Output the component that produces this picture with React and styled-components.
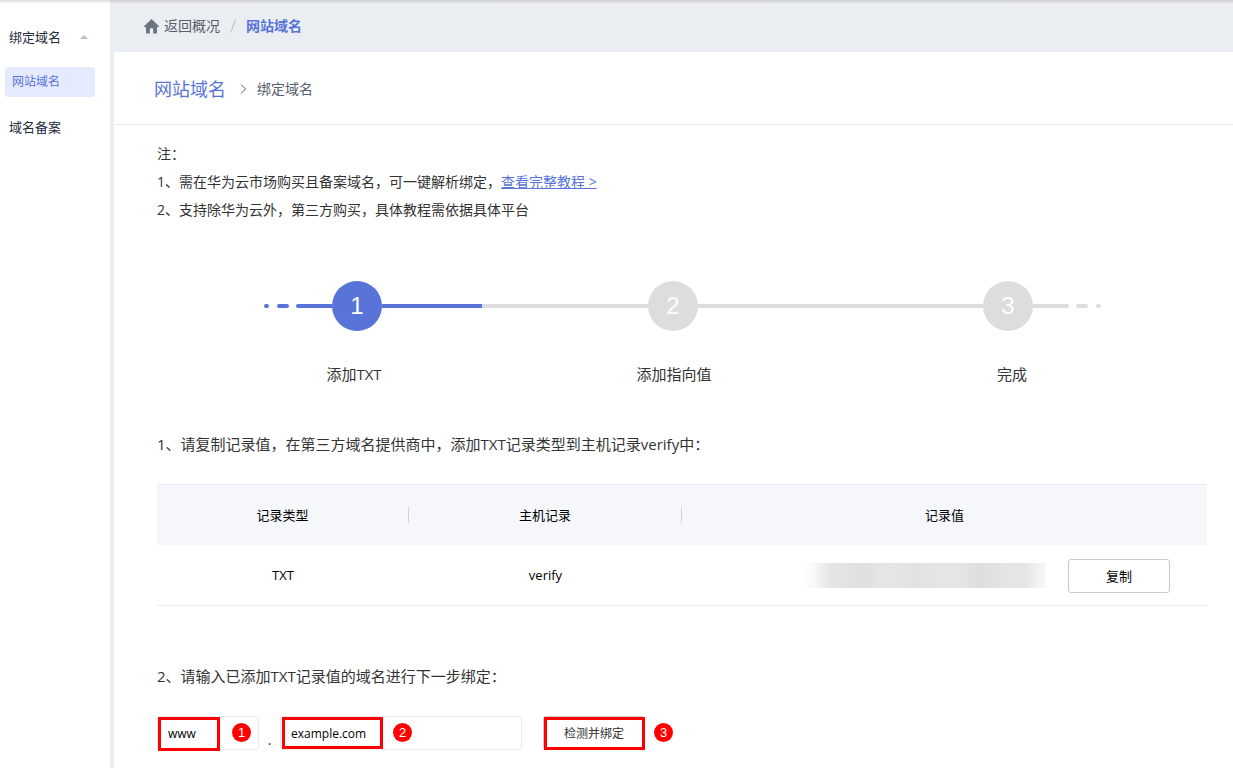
import React from 'react';
import styled, { createGlobalStyle } from 'styled-components';

const BLUE = '#5874d8';
const GREY = '#dddddd';
const RED = '#ff0000';

const GlobalStyle = createGlobalStyle`
  *, *::before, *::after { box-sizing: border-box; }
  body {
    margin: 0;
    background: #ffffff;
    color: #333333;
    font-family: "Open Sans", "Noto Sans CJK SC", sans-serif;
    font-size: 14px;
    line-height: 20px;
  }
  button, input { font-family: inherit; }
`;

const Page = styled.div`
  display: flex;
  min-height: 100vh;
  position: relative;
  overflow: hidden;
  &::before {
    content: '';
    position: absolute;
    inset: 0 0 auto 0;
    height: 4px;
    background: linear-gradient(rgba(0, 0, 0, 0.13), rgba(0, 0, 0, 0));
  }
`;

const Sidebar = styled.nav`
  flex: none;
  width: 114px;
  padding: 22px 15px 0 5px;
  border-right: 4px solid #eaedf2;
  display: flex;
  flex-direction: column;
  gap: 15px;
`;

const NavItem = styled.a`
  display: flex;
  align-items: center;
  justify-content: space-between;
  height: 30px;
  padding: 0 7px 0 ${(p) => (p.$active ? 7 : 4)}px;
  border-radius: 3px;
  font-size: ${(p) => (p.$active ? 12 : 13)}px;
  color: ${(p) => (p.$active ? BLUE : '#252b3a')};
  background: ${(p) => (p.$active ? '#e6eaff' : 'transparent')};
  text-decoration: none;
  white-space: nowrap;
`;

const Main = styled.main`
  flex: 1;
  min-width: 0;
`;

const TopBar = styled.div`
  display: flex;
  align-items: center;
  height: 52px;
  padding-left: 30px;
  background: #eaedf2;
`;

const HomeLink = styled.a`
  display: flex;
  align-items: center;
  gap: 5px;
  color: #575d6c;
  text-decoration: none;
`;

const Slash = styled.svg`
  margin: 0 10px;
`;

const Current = styled.span`
  color: ${BLUE};
  font-weight: 700;
`;

const Heading = styled.header`
  display: flex;
  align-items: center;
  height: 73px;
  padding: 2px 0 0 40px;
  border-bottom: 1px solid #e8eaef;
  color: #575d6c;
`;

const Chevron = styled.svg`
  margin: 0 10px 0 14px;
`;

const HeadingLink = styled.a`
  font-size: 18px;
  color: ${BLUE};
  text-decoration: none;
`;

const Content = styled.div`
  padding: 15px 26px 17px 43px;
`;

const Note = styled.p`
  margin: 0;
  line-height: 28px;
  a { color: ${BLUE}; }
`;

const Track = styled.div`
  display: flex;
  align-items: center;
  margin-top: 57px;
  padding: 0 106px 0 107px;
`;

const Bar = styled.span`
  flex: ${(p) => (p.$grow ? `${p.$grow} 1 0` : 'none')};
  width: ${(p) => p.$width || 0}px;
  height: 4px;
  margin: ${(p) => p.$gap || '0'};
  background: ${(p) => (p.$done ? BLUE : GREY)};
  border-radius: ${(p) => p.$radius || '0'};
`;

const Circle = styled.span`
  flex: none;
  width: 50px;
  height: 50px;
  border-radius: 50%;
  background: ${(p) => (p.$done ? BLUE : GREY)};
  color: #ffffff;
  font: 24px/50px "Liberation Sans", sans-serif;
  text-align: center;
`;

const StepLabels = styled.div`
  display: grid;
  grid-template-columns: 180fr 460fr 216fr;
  margin-top: 33px;
  padding: 0 87px 0 107px;
  font-size: 15px;
  text-align: center;
`;

const Instruction = styled.p`
  margin: ${(p) => p.$top}px 0 0;
  font-size: 15px;
  line-height: 20px;
`;

const RecordTable = styled.table`
  width: 100%;
  margin-top: 30px;
  table-layout: fixed;
  border-collapse: collapse;
  border-top: 1px solid #e8eaef;
  border-bottom: 1px solid #e8eaef;
  color: #000000;
  font-size: 13px;
  th, td {
    padding: 0;
    text-align: center;
    font-weight: 400;
  }
  th { height: 60px; }
  td { height: 61px; }
  thead { background: #f5f7fb; }
`;

const HeadCell = styled.span`
  display: block;
  line-height: 16px;
  border-right: ${(p) => (p.$last ? 0 : 1)}px solid #d0d4e0;
`;

const ValueCell = styled.div`
  display: flex;
  align-items: center;
  justify-content: flex-end;
  gap: 22px;
  padding: 2px 37px 0 0;
`;

const MaskedValue = styled.span`
  width: 244px;
  height: 25px;
  background: linear-gradient(90deg, #ffffff 0%, #f8f8f8 5%, #e5e6e6 11%, #dedfdf 25%, #e6e6e6 34%, #e1e3e2 46%, #e5e5e5 64%, #dededf 73%, #e5e5e5 84%, #e4e4e4 91%, #f4f4f4 98%, #f8f8f8 100%);
`;

const CopyButton = styled.button`
  width: 102px;
  height: 34px;
  padding: 0;
  border: 1px solid #cacaca;
  border-radius: 3px;
  background: #ffffff;
  color: #000000;
  font-size: 13px;
`;

const DomainForm = styled.form`
  display: flex;
  align-items: flex-start;
  margin-top: 30px;
`;

const Field = styled.div`
  position: relative;
  flex: none;
  width: ${(p) => p.$width}px;
`;

const TextInput = styled.input`
  display: block;
  width: 100%;
  height: 34px;
  padding: 0 10px;
  border: 1px solid #e8eaef;
  border-radius: 3px;
  background: #ffffff;
  color: #000000;
  font-size: 12px;
  outline: none;
`;

const Dot = styled.span`
  width: 21px;
  padding-top: 14px;
  text-align: center;
`;

const BindButton = styled.button`
  display: block;
  width: 100%;
  height: 34px;
  padding: 0;
  border: 1px solid #cacaca;
  border-radius: 3px;
  background: #ffffff;
  color: #333333;
  font-size: 12px;
`;

const Highlight = styled.span`
  position: absolute;
  top: 1px;
  left: ${(p) => p.$left}px;
  width: ${(p) => p.$width}px;
  height: ${(p) => p.$height}px;
  border: 3px solid ${RED};
  pointer-events: none;
`;

const Badge = styled.span`
  position: absolute;
  top: 7px;
  left: ${(p) => p.$left}px;
  width: 19px;
  height: 19px;
  border-radius: 50%;
  background: ${RED};
  color: #ffffff;
  font: 13px/19px "Liberation Sans", sans-serif;
  text-align: center;
`;

function HomeIcon() {
  return (
    <svg width="15" height="15" viewBox="0 0 15 15" fill="#6b7480" aria-hidden="true">
      <path d="M7.5 0 L15 7.2 L14.2 8.2 H13 V14 Q13 14.5 12.4 14.5 H9.2 V10.5 Q9.2 9 7.5 9 Q5.8 9 5.8 10.5 V14.5 H2.6 Q2 14.5 2 14 V8.2 H0.8 L0 7.2 Z" />
    </svg>
  );
}

export default function App() {
  return (
    <Page lang="zh-CN">
      <GlobalStyle />
      <Sidebar>
        <NavItem href="#bind">
          绑定域名
          <svg width="8" height="4" viewBox="0 0 8 4" fill="#b8bccb" aria-hidden="true">
            <path d="M4 0 L8 4 H0 Z" />
          </svg>
        </NavItem>
        <NavItem href="#site" $active>网站域名</NavItem>
        <NavItem href="#record">域名备案</NavItem>
      </Sidebar>
      <Main>
        <TopBar>
          <HomeLink href="#overview"><HomeIcon />返回概况</HomeLink>
          <Slash width="6" height="14" viewBox="0 0 6 14" stroke="#b9bdc7" fill="none" aria-hidden="true">
            <path d="M5.5 0.5 L0.8 13.5" />
          </Slash>
          <Current>网站域名</Current>
        </TopBar>
        <Heading>
          <HeadingLink href="#site">网站域名</HeadingLink>
          <Chevron width="7" height="10" viewBox="0 0 7 10" stroke="#575d6c" fill="none" aria-hidden="true">
            <path d="M1 0.5 L5.5 5 L1 9.5" />
          </Chevron>
          <span>绑定域名</span>
        </Heading>
        <Content>
          <Note>注：</Note>
          <Note>1、需在华为云市场购买且备案域名，可一键解析绑定，<a href="#guide">查看完整教程 &gt;</a></Note>
          <Note>2、支持除华为云外，第三方购买，具体教程需依据具体平台</Note>

          <Track>
            <Bar $done $width={5} $radius="2px" />
            <Bar $done $width={12} $gap="0 7px 0 8px" $radius="2px" />
            <Bar $done $width={36} $radius="2px 0 0 2px" />
            <Circle $done>1</Circle>
            <Bar $done $grow={100} />
            <Bar $grow={166} />
            <Circle>2</Circle>
            <Bar $grow={285} />
            <Circle>3</Circle>
            <Bar $width={36} $radius="0 2px 2px 0" />
            <Bar $width={12} $gap="0 8px 0 7px" $radius="2px" />
            <Bar $width={5} $radius="2px" />
          </Track>
          <StepLabels>
            <span>添加TXT</span>
            <span>添加指向值</span>
            <span>完成</span>
          </StepLabels>

          <Instruction $top={50}>1、请复制记录值，在第三方域名提供商中，添加TXT记录类型到主机记录verify中：</Instruction>
          <RecordTable>
            <colgroup>
              <col width="24%" />
              <col width="26%" />
              <col width="50%" />
            </colgroup>
            <thead>
              <tr>
                <th scope="col"><HeadCell>记录类型</HeadCell></th>
                <th scope="col"><HeadCell>主机记录</HeadCell></th>
                <th scope="col"><HeadCell $last>记录值</HeadCell></th>
              </tr>
            </thead>
            <tbody>
              <tr>
                <td>TXT</td>
                <td>verify</td>
                <td>
                  <ValueCell>
                    <MaskedValue />
                    <CopyButton type="button">复制</CopyButton>
                  </ValueCell>
                </td>
              </tr>
            </tbody>
          </RecordTable>

          <Instruction $top={60}>2、请输入已添加TXT记录值的域名进行下一步绑定：</Instruction>
          <DomainForm onSubmit={(e) => e.preventDefault()}>
            <Field $width={102}>
              <TextInput aria-label="主机名" defaultValue="www" />
              <Highlight $left={1} $width={62} $height={34} />
              <Badge $left={75}>1</Badge>
            </Field>
            <Dot>.</Dot>
            <Field $width={242}>
              <TextInput aria-label="域名" defaultValue="example.com" />
              <Highlight $left={2} $width={101} $height={32} />
              <Badge $left={113}>2</Badge>
            </Field>
            <Dot aria-hidden="true" />
            <Field $width={102}>
              <BindButton type="submit">检测并绑定</BindButton>
              <Highlight $left={1} $width={101} $height={33} />
              <Badge $left={111}>3</Badge>
            </Field>
          </DomainForm>
        </Content>
      </Main>
    </Page>
  );
}
